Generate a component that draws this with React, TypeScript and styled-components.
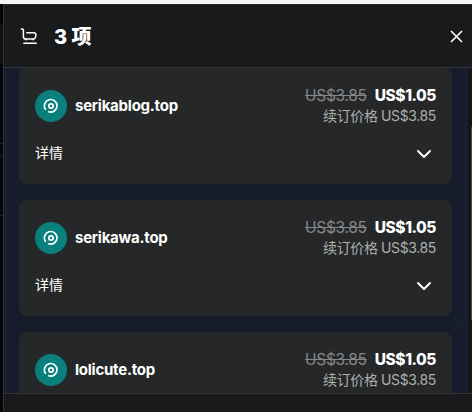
import React from "react";
import styled, { createGlobalStyle } from "styled-components";

const GlobalStyle = createGlobalStyle`
  * { box-sizing: border-box; }
  body { margin: 0; overflow: hidden; background: #0b0c0e; }
`;

const Screen = styled.div`
  width: 472px;
  height: 412px;
  display: flex;
  flex-direction: column;
  overflow: hidden;
  color: #fff;
  font-family: Inter, "Noto Sans CJK SC", sans-serif;
`;

const TopStrip = styled.div`
  height: 4px;
  flex: none;
  background: #f4f5f5;
`;

const Main = styled.div`
  flex: 1;
  min-height: 0;
  display: flex;
`;

const Backdrop = styled.div`
  width: 3px;
  flex: none;
  background: linear-gradient(
    #030404 0 20px, #111213 20px 60px, #060708 60px 139px, #1c1e1f 139px 140px,
    #060708 140px 152px, #1c1e1f 152px 153px, #060708 153px 211px, #1c1e1f 211px 212px, #060708 212px
  );
`;

const Drawer = styled.section`
  flex: 1;
  min-width: 0;
  display: flex;
  flex-direction: column;
  border-left: 1px solid #303235;
  border-top: 1px solid #292a2b;
  background: #191a1b;
`;

const Header = styled.header`
  height: 63px;
  flex: none;
  display: flex;
  align-items: center;
  padding: 0 9px 0 16px;
  border-bottom: 1px solid #36383a;
`;

const Title = styled.h2`
  flex: 1;
  margin: 2px 0 0 17px;
  font-size: 20px;
  line-height: 28px;
  font-weight: 800;
`;

const IconButton = styled.button`
  display: flex;
  padding: 0;
  border: 0;
  background: none;
  color: #fff;
`;

const ScrollArea = styled.div`
  height: 325px;
  flex: none;
  display: flex;
`;

const List = styled.div`
  width: 464px;
  flex: none;
  overflow: hidden;
  display: flex;
  flex-direction: column;
  gap: 16px;
  padding: 0 16px 0 15px;
  background: #181e2e;
`;

const ScrollTrack = styled.div`
  flex: 1;
  padding: 59px 0 0 3px;
  background: #151617;
`;

const ScrollThumb = styled.div`
  width: 1px;
  height: 193px;
  background: #47494b;
`;

const Card = styled.article`
  height: 116px;
  flex: none;
  display: flex;
  flex-direction: column;
  padding: 0 16px;
  border-radius: 8px;
  background: #252728;
  box-shadow: 0 1px 10px rgba(16, 20, 33, 0.55);
`;

const ProductRow = styled.div`
  height: 76px;
  flex: none;
  display: flex;
  align-items: center;
`;

const Logo = styled.span`
  width: 32px;
  height: 32px;
  display: flex;
  align-items: center;
  justify-content: center;
  border-radius: 50%;
  background: #09807b;
`;

const Domain = styled.strong`
  flex: 1;
  margin-left: 8px;
  font-size: 15px;
  line-height: 20px;
  font-weight: 700;
  letter-spacing: -0.24px;
`;

const Prices = styled.div`
  display: flex;
  flex-direction: column;
  align-items: flex-end;
`;

const PriceLine = styled.div`
  display: flex;
  gap: 8px;
  height: 20px;
  font-size: 15.5px;
  line-height: 20px;
`;

const OldPrice = styled.s`
  color: #85878a;
  letter-spacing: -0.3px;
`;

const Price = styled.strong`
  font-weight: 800;
  letter-spacing: -0.45px;
`;

const Renewal = styled.div`
  height: 20px;
  font-size: 14px;
  line-height: 20px;
  color: #adafb1;
  letter-spacing: -0.38px;
`;

const DetailsRow = styled.div`
  height: 18px;
  display: flex;
  align-items: center;
  justify-content: space-between;
  padding-right: 4px;
  font-size: 14px;
  line-height: 18px;

  svg { margin-top: 2px; }
`;

const Footer = styled.footer`
  flex: 1;
  border-top: 1px solid #313334;
  background: #191a1b;
`;

const CartIcon = () => (
  <svg width="17" height="18" viewBox="0 0 17 18" fill="none" stroke="currentColor" strokeWidth="1.5" strokeLinecap="round" strokeLinejoin="round">
    <path d="M1.4 2h1c.7 0 1 .4 1 1v6.4c0 1.6.9 2.6 2.5 2.6h7.2c1.3 0 2.1-.7 2.4-1.8l.4-2c.2-1.6-.6-2.4-2-2.4H6.8M3.8 16.2h12.4" />
    <path d="M6.2 12.2v.5M13.1 12.2v.5" />
  </svg>
);

const CloseIcon = () => (
  <svg width="13" height="13" viewBox="0 0 13 13" fill="none" stroke="currentColor" strokeWidth="1.6">
    <path d="m1 1 11 11M12 1 1 12" />
  </svg>
);

const SwirlIcon = () => (
  <svg width="16" height="16" viewBox="0 0 16 16" fill="none" stroke="#fff" strokeWidth="1.7" strokeLinecap="round">
    <path d="M2.4 11.2A6.3 6.3 0 1 1 5.7 13.8" />
    <circle cx="8" cy="8" r="2.2" />
  </svg>
);

const ChevronIcon = () => (
  <svg width="16" height="10" viewBox="0 0 16 10" fill="none" stroke="currentColor" strokeWidth="2" strokeLinecap="round" strokeLinejoin="round">
    <path d="m2 2 6 6 6-6" />
  </svg>
);

const items = [
  { name: "serikablog.top", details: true },
  { name: "serikawa.top", details: true },
  { name: "lolicute.top", details: false },
];

export default function App() {
  return (
    <Screen>
      <GlobalStyle />
      <TopStrip />
      <Main>
        <Backdrop />
        <Drawer>
          <Header>
            <CartIcon />
            <Title>3 项</Title>
            <IconButton aria-label="关闭"><CloseIcon /></IconButton>
          </Header>
          <ScrollArea>
            <List>
              {items.map((item) => (
                <Card key={item.name}>
                  <ProductRow>
                    <Logo><SwirlIcon /></Logo>
                    <Domain>{item.name}</Domain>
                    <Prices>
                      <PriceLine>
                        <OldPrice>US$3.85</OldPrice>
                        <Price>US$1.05</Price>
                      </PriceLine>
                      <Renewal>续订价格 US$3.85</Renewal>
                    </Prices>
                  </ProductRow>
                  {item.details && (
                    <DetailsRow>
                      <span>详情</span>
                      <ChevronIcon />
                    </DetailsRow>
                  )}
                </Card>
              ))}
            </List>
            <ScrollTrack><ScrollThumb /></ScrollTrack>
          </ScrollArea>
          <Footer />
        </Drawer>
      </Main>
    </Screen>
  );
}
